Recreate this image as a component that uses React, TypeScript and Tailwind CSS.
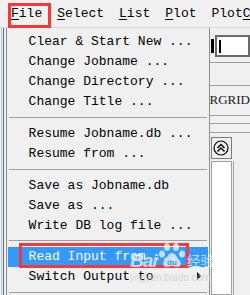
import React from "react";

const mono = { fontFamily: '"Liberation Mono", "DejaVu Sans Mono", monospace' };

type Row = { kind: "item"; label: string; active?: boolean; sub?: boolean } | { kind: "sep"; h: string; top: string };

const rows: Row[] = [
  { kind: "item", label: "Clear & Start New ..." },
  { kind: "item", label: "Change Jobname ..." },
  { kind: "item", label: "Change Directory ..." },
  { kind: "item", label: "Change Title ..." },
  { kind: "sep", h: "h-[12px]", top: "pt-[5px]" },
  { kind: "item", label: "Resume Jobname.db ..." },
  { kind: "item", label: "Resume from ..." },
  { kind: "sep", h: "h-[12px]", top: "pt-[5px]" },
  { kind: "item", label: "Save as Jobname.db" },
  { kind: "item", label: "Save as ..." },
  { kind: "item", label: "Write DB log file ..." },
  { kind: "sep", h: "h-[11px]", top: "pt-[4px]" },
  { kind: "item", label: "Read Input from ...", active: true },
  { kind: "item", label: "Switch Output to", sub: true },
  { kind: "sep", h: "h-[12px]", top: "pt-[5px]" },
];

function MenuTitle({ first, rest }: { first: string; rest: string }) {
  return (
    <span>
      <span className="underline underline-offset-[2px]">{first}</span>
      {rest}
    </span>
  );
}

function BaiduMark() {
  return (
    <div className="absolute left-[130px] top-[240px] w-[95px] h-[48px] pointer-events-none">
      <div className="flex items-end h-[30px]">
        <span className="text-[19px] font-bold italic text-white/70 leading-none tracking-[-1px]" style={{ fontFamily: '"Liberation Sans", Arial, sans-serif' }}>
          Bai
        </span>
        <svg width="28" height="28" viewBox="0 0 28 28" className="ml-[1px]">
          <g fill="rgba(255,255,255,0.7)">
            <ellipse cx="9" cy="5" rx="3" ry="4" />
            <ellipse cx="18" cy="5" rx="3" ry="4" />
            <ellipse cx="4" cy="12" rx="3" ry="3.5" />
            <ellipse cx="24" cy="12" rx="3" ry="3.5" />
            <path d="M14 11c-4 0-5 5-8 8-2 3 0 7 4 6 2-1 3-1 4-1s2 0 4 1c4 1 6-3 4-6-3-3-4-8-8-8z" />
          </g>
          <text x="14" y="23" textAnchor="middle" fontSize="8" fill="#3399ff" fontFamily="Liberation Sans, sans-serif" fontWeight="bold">du</text>
        </svg>
        <span className="text-[14px] text-white/70 leading-none ml-[1px] mb-[3px]" style={{ fontFamily: '"Noto Sans CJK SC", sans-serif' }}>
          经验
        </span>
      </div>
      <div className="text-[10px] text-[#c8c8c8]/70 leading-none mt-[3px]" style={{ fontFamily: '"Liberation Sans", Arial, sans-serif' }}>
        jingyan.baidu.com
      </div>
    </div>
  );
}

export default function App() {
  return (
    <div className="relative w-[250px] h-[295px] overflow-hidden bg-[#f0f0f0] text-[13px] text-black" style={mono}>
      {/* menu bar */}
      <div className="h-[28px] flex items-center gap-[15px] pl-[11px] whitespace-nowrap leading-[20px] border-b border-[#d8d8d8]">
        <MenuTitle first="F" rest="ile" />
        <MenuTitle first="S" rest="elect" />
        <MenuTitle first="L" rest="ist" />
        <MenuTitle first="P" rest="lot" />
        <span>
          Plot<span className="underline underline-offset-[2px]">C</span>trls
        </span>
      </div>

      <div className="flex h-[267px]">
        {/* left frame edge */}
        <div className="w-[6px] relative">
          <div className="absolute left-[3px] top-0 bottom-0 w-px bg-[#54709c]" />
          <div className="absolute left-[1px] top-0 bottom-0 w-px bg-[#b8c4d4]" />
        </div>

        {/* dropdown */}
        <div className="w-[218px] border-x border-[#8c8c8c] px-px pt-[4px] bg-[#f0f0f0]">
          {rows.map((r, i) =>
            r.kind === "sep" ? (
              <div key={i} className={`${r.h} ${r.top} px-px`}>
                <div className="h-px bg-[#a0a0a0]" />
              </div>
            ) : (
              <div
                key={i}
                className={`relative h-[20px] leading-[20px] pl-[21px] whitespace-nowrap ${r.active ? "bg-[#3399ff] text-white" : ""}`}
              >
                {r.label}
                {r.sub && (
                  <svg className="absolute right-[6px] top-[5px]" width="5" height="8" viewBox="0 0 5 8">
                    <path d="M0 0L4 4L0 8z" fill="#000" />
                  </svg>
                )}
              </div>
            )
          )}
        </div>

        {/* right side of the application window */}
        <div className="flex-1 flex flex-col">
          <div className="h-[6px]" />
          <div className="flex items-center h-[24px] pl-[1px]">
            <div className="w-[3px] h-[14px] bg-black" />
            <div className="ml-[1px] flex-1 h-[22px] border-2 border-[#6a6a6a] bg-white flex items-center pl-[2px]">
              <div className="w-[2px] h-[13px] bg-black" />
            </div>
          </div>
          <div className="h-[4px]" />
          <div className="h-[23px] border-t border-[#a0a0a0]" />
          <div
            className="h-[30px] border-t border-[#a0a0a0] pt-[7px] text-[13px] leading-[14px] text-[#202020] whitespace-nowrap"
            style={{ fontFamily: '"Liberation Serif", serif' }}
          >
            RGRID
          </div>
          <div className="h-[8px] border-t border-[#a0a0a0]" />
          <div className="h-[9px] border-t border-[#a0a0a0]" />
          <div className="h-[5px] border-t border-[#a0a0a0]" />
          <div className="flex">
            <div className="w-[21px] h-[22px] ml-px border border-[#7a7a7a] bg-[#f0f0f0] flex items-center justify-center">
              <svg width="16" height="16" viewBox="0 0 16 16">
                <circle cx="8" cy="8" r="7" fill="none" stroke="#000" strokeWidth="1.2" />
                <path d="M4.5 8L8 4.5L11.5 8M4.5 11.5L8 8L11.5 11.5" fill="none" stroke="#000" strokeWidth="1.4" />
              </svg>
            </div>
          </div>
          <div className="flex flex-1 mt-[2px]">
            <div className="w-[21px] ml-px border border-[#a0a0a0] bg-white" />
            <div className="w-px ml-[1px] bg-[#a0a0a0]" />
          </div>
        </div>
      </div>

      {/* annotation boxes */}
      <div className="absolute left-[8px] top-[3px] w-[43px] h-[25px] border-[3px] border-[#f23a3a]" />
      <div className="absolute left-[19px] top-[243px] w-[170px] h-[25px] border-[3px] border-[#f23a3a]" />
      <BaiduMark />
    </div>
  );
}
